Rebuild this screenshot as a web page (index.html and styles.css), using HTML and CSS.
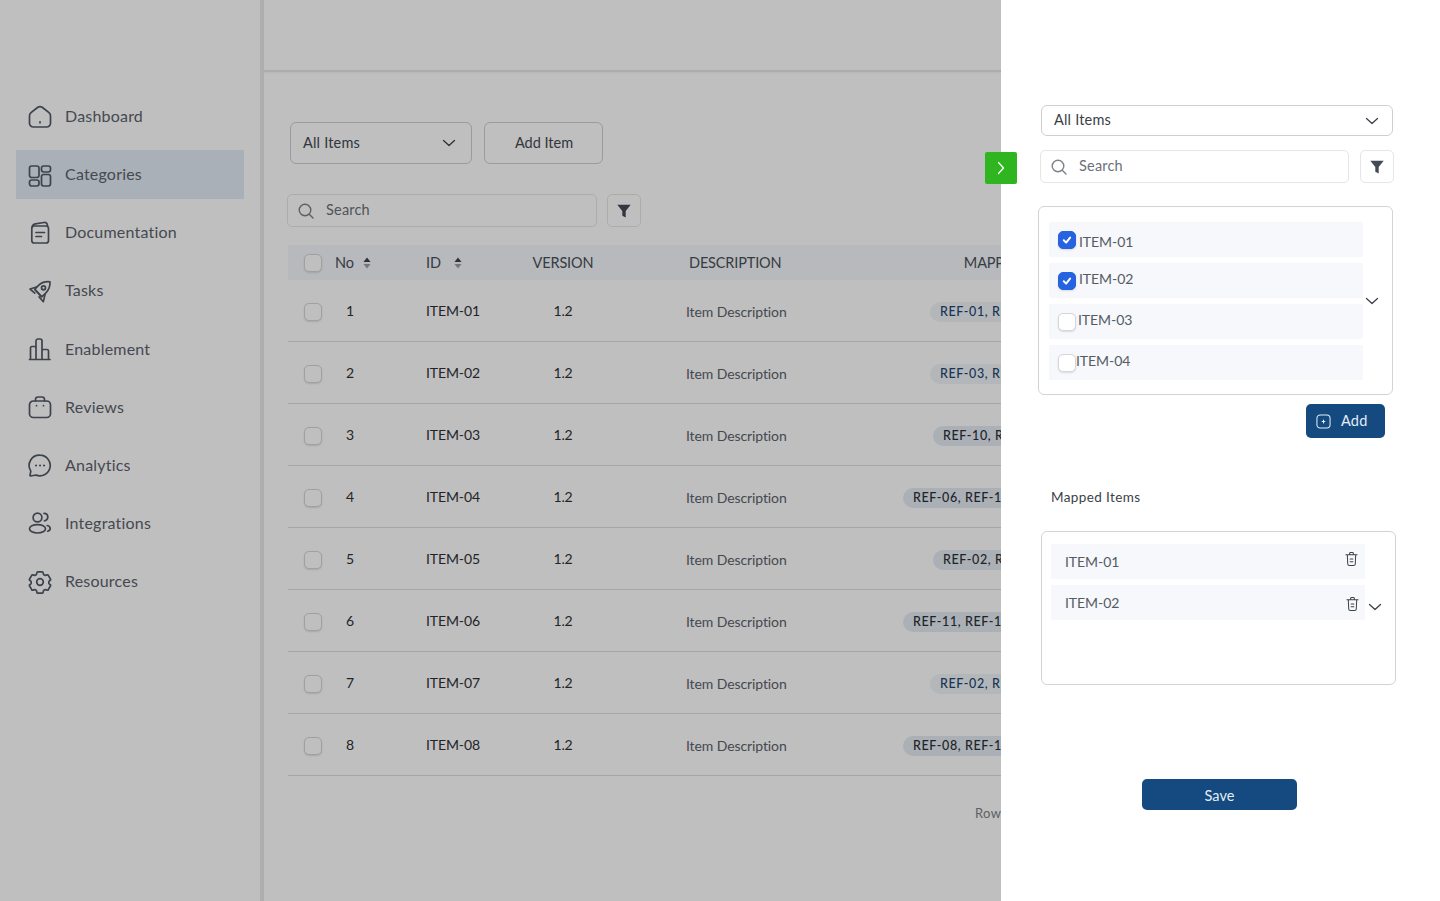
FILE: index.html
```html
<!DOCTYPE html>
<html lang="en">
<head>
<meta charset="utf-8">
<title>Categories</title>
<link rel="stylesheet" href="styles.css">
</head>
<body>
<div class="app">
  <aside class="sidebar">
    <nav class="nav">
      <a class="nav-item"><svg class="nav-icon" viewBox="0 0 24 24"><path d="M1.500 10.800c0-1.200.6-2.300 1.500-3.100l6.500-5.200c1.500-1.100 3.500-1.100 5 0L21 7.700c.9.800 1.500 1.900 1.500 3.100v7.400a3.800 3.800 0 0 1-3.800 3.800H5.300a3.800 3.800 0 0 1-3.800-3.800z"/><path d="M12 16.800v1"/></svg><span>Dashboard</span></a>
      <a class="nav-item active"><svg class="nav-icon" viewBox="0 0 24 24"><rect x="1.500" y="3" width="9.500" height="11.500" rx="2.200"/><rect x="1.500" y="17" width="9.500" height="6" rx="2.200"/><rect x="13.500" y="3" width="9" height="6" rx="2.200"/><rect x="13.500" y="11.500" width="9" height="11.500" rx="2.200"/></svg><span>Categories</span></a>
      <a class="nav-item"><svg class="nav-icon" viewBox="0 0 24 24"><rect x="3.800" y="5" width="16.700" height="17" rx="2.500"/><path d="M4 6.500c.2-2 1.400-3.300 3.300-3.600l8.700-1.400c2.200-.3 3.500 1 3.500 3.500M8 11.500h8.500M8 15.500h5.500"/></svg><span>Documentation</span></a>
      <a class="nav-item"><svg class="nav-icon" viewBox="0 0 24 24"><path d="M22 2.800c-4.700-.5-9 1-12 4l-3.300 3.500 7 7.600 3.800-3.500c3-3 4.800-6.600 4.500-11.600z"/><circle cx="15.500" cy="8.800" r="2"/><path d="M8.500 8 2 10l4.800 4.200M17 15.500l-1.700 7.200-4.200-4.800M8 11.500l5 5.500"/></svg><span>Tasks</span></a>
      <a class="nav-item"><svg class="nav-icon" viewBox="0 0 24 24"><path d="M2.500 22.500V11c0-1 .6-1.500 1.500-1.500h2.500c.9 0 1.500.5 1.500 1.500v11.500M8 22.500V4c0-1.300.8-2 2-2h2c1.200 0 2 .7 2 2v18.500M14 22.500V14c0-1 .6-1.500 1.500-1.500H19c1 0 1.500.5 1.500 1.500v8.500M1.500 22.500h20.500"/></svg><span>Enablement</span></a>
      <a class="nav-item"><svg class="nav-icon" viewBox="0 0 24 24"><rect x="1.500" y="6" width="21" height="16.500" rx="3.800"/><path d="M7.500 6V4.500C7.500 3 8.500 2 10 2h4C15.500 2 16.500 3 16.500 4.500V6M8.500 10.500v.2M15.500 10.500v.2"/></svg><span>Reviews</span></a>
      <a class="nav-item"><svg class="nav-icon" viewBox="0 0 24 24"><path d="M12 2.200a10.300 10.300 0 1 1-3.800 19.900c-.9-.3-5.300 1.200-6.100.7-.6-.4 1-4 .6-4.900A10.300 10.300 0 0 1 12 2.200z"/><path class="dots" d="M8 12.500h.1M12 12.500h.1M16 12.500h.1"/></svg><span>Analytics</span></a>
      <a class="nav-item"><svg class="nav-icon" viewBox="0 0 24 24"><circle cx="9.500" cy="6.500" r="4.400"/><ellipse cx="9.500" cy="17.800" rx="8" ry="4.200"/><path d="M16 2.300c2.300 0 3.800 1.700 3.800 3.800 0 1.900-1.500 3.400-3.300 3.700M19.200 14.500c2 .5 3 1.700 3 3 0 1.200-.9 2.200-2.500 2.700"/></svg><span>Integrations</span></a>
      <a class="nav-item"><svg class="nav-icon" viewBox="0 0 24 24"><circle cx="12" cy="12" r="3.300"/><path d="M9.800 1.800h4.400c.6 0 .9.400 1 1l.3 1.600 1.900 1.100 1.600-.6c.6-.2 1-.1 1.300.4l2.100 3.700c.3.500.2 1-.2 1.300l-1.300 1v2.400l1.300 1c.4.300.5.800.2 1.300l-2.100 3.700c-.3.500-.7.600-1.300.4l-1.600-.6-1.900 1.100-.3 1.600c-.1.600-.4 1-1 1H9.800c-.6 0-.9-.4-1-1l-.3-1.600-1.900-1.100-1.600.6c-.6.200-1 .1-1.300-.4l-2.100-3.700c-.3-.5-.2-1 .2-1.300l1.300-1v-2.400l-1.300-1c-.4-.3-.5-.8-.2-1.300l2.100-3.700c.3-.5.7-.6 1.300-.4l1.600.6 1.900-1.100.3-1.600c.1-.6.4-1 1-1z" stroke-linejoin="round"/></svg><span>Resources</span></a>
    </nav>
  </aside>
  <main class="main">
    <header class="topbar"></header>
    <div class="toolbar">
      <div class="select select-page"><span>All Items</span><svg class="chev" viewBox="0 0 14 8"><path d="M1.500 1.500 7 6.500l5.500-5"/></svg></div>
      <button class="ghost-btn">Add Item</button>
    </div>
    <div class="searchbar searchbar-page">
      <div class="search search-page"><svg class="search-ico" viewBox="0 0 18 18"><circle cx="8" cy="8" r="5.800"/><path d="m12.500 12.500 3.500 3.500"/></svg><span>Search</span></div>
      <div class="filter filter-page"><svg viewBox="0 0 14 14"><path d="M.3 .8h13.400L8.700 7v6.500L5.300 11.800V7z"/></svg></div>
    </div>
    <section class="table">
      <div class="row head">
        <span class="check"></span>
        <span class="th-sort">No <svg class="sort" viewBox="0 0 8 12"><path class="up" d="M4 .5 7.500 5h-7z"/><path class="down" d="M4 11.500.5 7h7z"/></svg></span>
        <span class="th-sort th-id">ID <svg class="sort" viewBox="0 0 8 12"><path class="up" d="M4 .5 7.500 5h-7z"/><path class="down" d="M4 11.500.5 7h7z"/></svg></span>
        <span class="center">VERSION</span>
        <span class="desc-head">DESCRIPTION</span>
        <span class="center map-head">MAPPED ITEMS</span>
      </div>
      <div class="row"><span class="check"></span><span class="num">1</span><span>ITEM-01</span><span class="center">1.2</span><span class="desc">Item Description</span><span class="pill pill-blue">REF-01, REF-02</span></div>
      <div class="row"><span class="check"></span><span class="num">2</span><span>ITEM-02</span><span class="center">1.2</span><span class="desc">Item Description</span><span class="pill pill-blue">REF-03, REF-04</span></div>
      <div class="row"><span class="check"></span><span class="num">3</span><span>ITEM-03</span><span class="center">1.2</span><span class="desc">Item Description</span><span class="pill pill-mid">REF-10, REF-04</span></div>
      <div class="row"><span class="check"></span><span class="num">4</span><span>ITEM-04</span><span class="center">1.2</span><span class="desc">Item Description</span><span class="pill pill-wide">REF-06, REF-10</span></div>
      <div class="row"><span class="check"></span><span class="num">5</span><span>ITEM-05</span><span class="center">1.2</span><span class="desc">Item Description</span><span class="pill pill-mid">REF-02, REF-10</span></div>
      <div class="row"><span class="check"></span><span class="num">6</span><span>ITEM-06</span><span class="center">1.2</span><span class="desc">Item Description</span><span class="pill pill-wide">REF-11, REF-12</span></div>
      <div class="row"><span class="check"></span><span class="num">7</span><span>ITEM-07</span><span class="center">1.2</span><span class="desc">Item Description</span><span class="pill pill-blue">REF-02, REF-03</span></div>
      <div class="row"><span class="check"></span><span class="num">8</span><span>ITEM-08</span><span class="center">1.2</span><span class="desc">Item Description</span><span class="pill pill-wide">REF-08, REF-10</span></div>
      <div class="pager">Rows per page</div>
    </section>
  </main>
</div>
<div class="scrim"></div>
<aside class="drawer">
  <button class="drawer-toggle"><svg viewBox="0 0 10 14"><path d="M2.500 1.500 7.500 7l-5 5.500"/></svg></button>
  <div class="select select-drawer"><span>All Items</span><svg class="chev" viewBox="0 0 14 8"><path d="M1.500 1.500 7 6.500l5.500-5"/></svg></div>
  <div class="searchbar searchbar-drawer">
    <div class="search search-drawer"><svg class="search-ico" viewBox="0 0 18 18"><circle cx="8" cy="8" r="5.800"/><path d="m12.500 12.500 3.500 3.500"/></svg><span>Search</span></div>
    <div class="filter filter-drawer"><svg viewBox="0 0 14 14"><path d="M.3 .8h13.400L8.700 7v6.500L5.300 11.800V7z"/></svg></div>
  </div>
  <div class="box box-pick">
    <div class="box-list">
      <div class="pick"><span class="check on"><svg viewBox="0 0 12 12"><path d="m2.800 6.300 2.300 2.300 4-5"/></svg></span><span class="pick-t1">ITEM-01</span></div>
      <div class="pick"><span class="check on"><svg viewBox="0 0 12 12"><path d="m2.800 6.300 2.300 2.300 4-5"/></svg></span><span class="pick-t2">ITEM-02</span></div>
      <div class="pick"><span class="check"></span><span class="pick-t3">ITEM-03</span></div>
      <div class="pick"><span class="check"></span><span class="pick-t4">ITEM-04</span></div>
    </div>
    <svg class="chev" viewBox="0 0 14 8"><path d="M1.500 1.500 7 6.500l5.500-5"/></svg>
  </div>
  <div class="add-wrap"><button class="add-btn"><svg viewBox="0 0 16 16"><rect x="1" y="1" width="14" height="14" rx="3.500"/><path d="M8 6.500v3M6.500 8h3"/></svg><span>Add</span></button></div>
  <h2 class="mapped-title">Mapped Items</h2>
  <div class="box box-mapped">
    <div class="box-list">
      <div class="mapped"><span>ITEM-01</span><svg class="trash" viewBox="0 0 14 16"><path d="M1 3.500h12M5 3.500V2c0-.6.400-1 1-1h2c.6 0 1 .4 1 1v1.500M2.500 3.500l.4 9.500c0 1.200.8 2 2 2h4.200c1.200 0 2-.8 2-2l.4-9.500M5.500 8h3M5.500 11h3"/></svg></div>
      <div class="mapped"><span>ITEM-02</span><svg class="trash trash-2" viewBox="0 0 14 16"><path d="M1 3.500h12M5 3.500V2c0-.6.400-1 1-1h2c.6 0 1 .4 1 1v1.500M2.500 3.500l.4 9.500c0 1.200.8 2 2 2h4.200c1.200 0 2-.8 2-2l.4-9.500M5.500 8h3M5.500 11h3"/></svg></div>
    </div>
    <svg class="chev" viewBox="0 0 14 8"><path d="M1.500 1.500 7 6.500l5.500-5"/></svg>
  </div>
  <div class="save-wrap"><button class="save-btn">Save</button></div>
</aside>
</body>
</html>
```
FILE: styles.css
```css
* { box-sizing: border-box; }
html, body { margin: 0; height: 100%; overflow: hidden; }
body {
  background: #fff;
  font-family: "Lato", "Noto Sans", sans-serif;
  color: #3a3f47;
}
button { font-family: inherit; cursor: pointer; }
svg { display: block; flex: none; }

.app { display: flex; height: 901px; }

/* Sidebar */
.sidebar {
  width: 264px;
  flex: none;
  border-right: 4px solid #e9e9e9;
  padding: 92px 16px 0;
}
.nav { display: flex; flex-direction: column; gap: 9.150px; }
.nav-item {
  display: flex;
  align-items: center;
  gap: 13px;
  height: 49px;
  padding-left: 12px;
  font-size: 16px;
  letter-spacing: .2px;
  color: #5c626c;
}
.nav-item span { transform: translateY(-1px); }
.nav-item.active { background: #e2ebf5; }
.nav-icon {
  width: 24px;
  height: 24px;
  fill: none;
  stroke: #535a65;
  stroke-width: 1.700;
  stroke-linecap: round;
  stroke-linejoin: round;
}
.nav-icon .dots { stroke-width: 2; }

/* Main */
.main { flex: 1; min-width: 0; overflow: hidden; }
.topbar {
  height: 72px;
  border-bottom: 2px solid #e6e6e6;
  box-shadow: 0 1px 2px rgba(0, 0, 0, .05);
}
.toolbar { display: flex; gap: 12px; margin: 50px 0 0 26px; }
.select {
  display: flex;
  align-items: center;
  justify-content: space-between;
  border: 1px solid #cfcfcf;
  background: #fff;
  font-size: 14.500px;
  letter-spacing: .2px;
  color: #444951;
}
.select > span { transform: translateY(-1px); }
.select-page { width: 182px; height: 42px; padding: 0 15px 0 12px; border-radius: 6px; }
.chev {
  width: 14px;
  height: 8px;
  fill: none;
  stroke: #3d424b;
  stroke-width: 1.300;
  stroke-linecap: round;
  stroke-linejoin: round;
}
.ghost-btn {
  width: 119px;
  height: 42px;
  padding: 0 0 2px 1px;
  border: 1px solid #cfcfcf;
  border-radius: 6px;
  background: #fff;
  font-size: 14.500px;
  letter-spacing: 0;
  color: #444951;
}
.searchbar { display: flex; }
.searchbar-page { gap: 10px; margin: 30px 0 0 23px; }
.search {
  display: flex;
  align-items: center;
  gap: 11px;
  height: 33px;
  padding-left: 9px;
  border: 1px solid #e6e6e6;
  border-radius: 5px;
  font-size: 14.500px;
  letter-spacing: .2px;
  color: #6b7078;
}
.search > span { transform: translateY(-1px); }
.search-page { width: 310px; }
.search-ico {
  width: 18px;
  height: 18px;
  fill: none;
  stroke: #7d8188;
  stroke-width: 1.400;
  stroke-linecap: round;
}
.filter {
  display: flex;
  align-items: center;
  justify-content: center;
  width: 34px;
  height: 33px;
  border: 1px solid #e6e6e6;
  border-radius: 5px;
}
.filter svg { width: 14px; height: 14px; fill: #434a56; }

/* Table */
.table { margin: 18px 0 0 24px; width: 1120px; font-size: 14px; letter-spacing: -.1px; color: #2f3135; }
.row {
  display: grid;
  grid-template-columns: 47px 91px 84px 106px 278px 240px;
  align-items: center;
  height: 62px;
  border-bottom: 1px solid #dedede;
}
.row > .check { margin-left: 16px; }
.head {
  height: 35px;
  border-bottom: 0;
  background: #f4f7fb;
  font-size: 14.500px;
  letter-spacing: -.15px;
  color: #4a5058;
}
.check {
  display: flex;
  align-items: center;
  justify-content: center;
  width: 18px;
  height: 18px;
  flex: none;
  border: 1px solid #d6d6d6;
  border-radius: 5px;
  background: #fff;
  box-shadow: 0 1px 2px rgba(0, 0, 0, .12);
}
.check.on { background: #2563e0; border-color: #2563e0; }
.check svg { width: 12px; height: 12px; fill: none; stroke: #fff; stroke-width: 2; stroke-linecap: round; stroke-linejoin: round; }
.row:not(.head) > .check { transform: translateY(1px); }
.th-sort { display: flex; align-items: center; gap: 9px; }
.th-id { gap: 13px; }
.sort { width: 8px; height: 12px; }
.sort .up { fill: #3d424b; }
.sort .down { fill: #9a9da3; }
.center { justify-self: center; white-space: nowrap; }
.map-head { transform: translateX(2px); }
.num { padding-left: 11px; }
.desc { padding-left: 70px; color: #5c626c; transform: translateY(1px); }
.desc-head { padding-left: 73px; }
.pill {
  justify-self: start;
  padding: 0 40px 0 10px;
  height: 20px;
  line-height: 20px;
  border-radius: 10px;
  background: #e4ebf3;
  font-size: 12.500px;
  font-weight: 500;
  letter-spacing: .6px;
  color: #2c2f35;
  white-space: nowrap;
  transform: translateY(1px);
}
.pill-blue { margin-left: 36px; background: #f0f4f9; color: #1f4670; }
.pill-mid { margin-left: 39px; }
.pill-wide { margin-left: 9px; }
.pager { padding: 29px 0 0 687px; font-size: 13px; letter-spacing: .4px; color: #7c7f85; white-space: nowrap; }

/* Scrim and drawer */
.scrim { position: fixed; inset: 0; background: rgba(0, 0, 0, .25); }
.drawer {
  position: fixed;
  top: 0;
  right: 0;
  bottom: 0;
  width: 439px;
  padding-top: 105px;
  background: #fff;
}
.drawer-toggle {
  position: absolute;
  left: -16px;
  top: 152px;
  display: flex;
  align-items: center;
  justify-content: center;
  width: 32px;
  height: 32px;
  padding: 0;
  border: 0;
  border-radius: 2px;
  background: #2fb51f;
}
.drawer-toggle svg { width: 10px; height: 14px; fill: none; stroke: #fff; stroke-width: 1.200; stroke-linecap: round; stroke-linejoin: round; }
.select-drawer {
  width: 352px;
  height: 31px;
  margin-left: 40px;
  padding: 0 13px 0 12px;
  border-radius: 6px;
  color: #3a3f47;
}
.searchbar-drawer { gap: 11px; margin: 14px 0 0 39px; }
.search-drawer { width: 309px; }
.box {
  display: flex;
  align-items: center;
  border: 1px solid #d3d3d3;
  border-radius: 6px;
  background: #fff;
}
.box-pick { width: 355px; height: 189px; margin: 23px 0 0 37px; padding-left: 10px; }
.box-list { display: flex; flex-direction: column; gap: 6px; width: 314px; flex: none; }
.box-pick .chev { margin-left: 2px; }
.pick, .mapped {
  display: flex;
  align-items: center;
  height: 35px;
  background: #f6f8fc;
  font-size: 14px;
  letter-spacing: -.05px;
  color: #555b64;
}
.pick { padding-left: 9px; gap: 3px; }
.pick .check { transform: translateY(1px); }
.pick-t1 { transform: translateY(2px); }
.pick-t2 { transform: translateY(-2px); }
.pick-t3 { transform: translateY(-2px); margin-left: -1px; }
.pick-t4 { transform: translateY(-2px); margin-left: -3px; }
.add-wrap { display: flex; justify-content: flex-end; margin: 9px 55px 0 0; }
.add-btn {
  display: flex;
  align-items: center;
  gap: 10px;
  width: 79px;
  height: 34px;
  padding: 0 0 0 10px;
  border: 0;
  border-radius: 5px;
  background: #144a80;
  font-size: 14.500px;
  letter-spacing: .2px;
  color: #e4edf6;
}
.add-btn span { transform: translateY(-1px); }
.add-btn svg { width: 15px; height: 15px; fill: none; stroke: #e4edf6; stroke-width: 1.100; stroke-linecap: round; }
.mapped-title {
  margin: 50px 0 0 50px;
  height: 18px;
  line-height: 18px;
  font-size: 13.500px;
  font-weight: 400;
  letter-spacing: .4px;
  color: #3a3f47;
}
.box-mapped { width: 355px; height: 154px; margin: 25px 0 0 40px; padding-left: 9px; }
.box-mapped .box-list { align-self: flex-start; margin-top: 12px; }
.box-mapped .chev { margin-left: 3px; transform: translateY(-1px); }
.mapped { justify-content: space-between; padding: 0 7px 0 14px; }
.mapped span { transform: translateY(-.5px); }
.trash { width: 13px; height: 16px; fill: none; stroke: #3d424b; stroke-width: 1.100; stroke-linecap: round; transform: translateY(-3px); }
.trash-2 { margin-right: -1px; transform: translateY(1px); }
.save-wrap { margin: 94px 0 0 141px; }
.save-btn {
  width: 155px;
  height: 31px;
  padding: 1px 0 0;
  border: 0;
  border-radius: 5px;
  background: #144a80;
  font-size: 14.500px;
  letter-spacing: .1px;
  color: #e4edf6;
}
```
